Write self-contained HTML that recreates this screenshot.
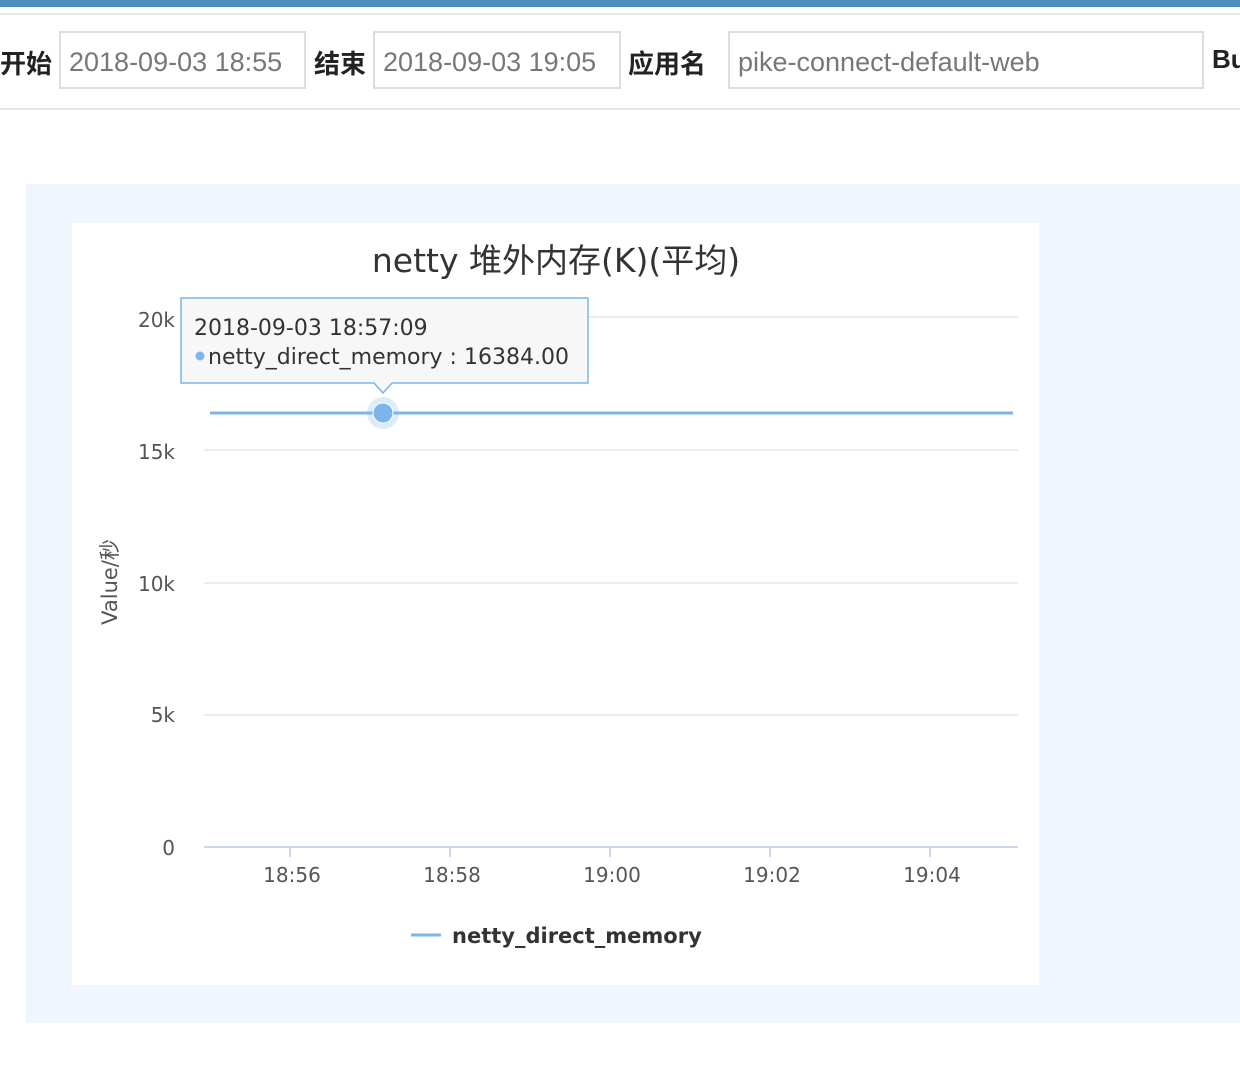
<!DOCTYPE html>
<html><head><meta charset="utf-8"><style>
body{margin:0;width:1240px;height:1067px;background:#fff;position:relative;overflow:hidden;font-family:"Liberation Sans","Noto Sans CJK SC",sans-serif;}
.abs{position:absolute}
.lbl{font-size:26px;color:#222;font-weight:bold;top:44px}
.inp{border:2px solid #ddd;height:58px;top:31px;font-size:27px;color:#777;line-height:58px;padding-left:8px;box-sizing:border-box;background:#fff}
</style></head><body>
<div class="abs" style="left:0;top:0;width:1240px;height:7px;background:#4d8dbb"></div>
<div class="abs" style="left:0;top:13px;width:1240px;height:2px;background:#e6e6e6"></div>
<div class="abs" style="left:0;top:108px;width:1240px;height:2px;background:#e6e6e6"></div>
<div class="abs lbl" style="left:0">开始</div>
<div class="abs inp" style="left:59px;width:247px">2018-09-03 18:55</div>
<div class="abs lbl" style="left:314px">结束</div>
<div class="abs inp" style="left:373px;width:248px">2018-09-03 19:05</div>
<div class="abs lbl" style="left:628px">应用名</div>
<div class="abs inp" style="left:728px;width:476px">pike-connect-default-web</div>
<div class="abs lbl" style="left:1212px">Bu</div>
<div class="abs" style="left:26px;top:184px;width:1214px;height:839px;background:#eff6fe"></div>
<div class="abs" style="left:72px;top:223px;width:967px;height:762px;background:#fff"></div>
<svg class="abs" style="left:0;top:0" width="1240" height="1067" font-family="DejaVu Sans, Noto Sans CJK SC, sans-serif">
<text x="556" y="272" text-anchor="middle" font-size="33" fill="#333">netty 堆外内存(K)(平均)</text>
<g stroke="#e6e6e6" stroke-width="1.5">
<line x1="204" y1="317" x2="1018" y2="317"/><line x1="204" y1="450" x2="1018" y2="450"/>
<line x1="204" y1="583" x2="1018" y2="583"/><line x1="204" y1="715" x2="1018" y2="715"/>
</g>
<line x1="204" y1="847" x2="1018" y2="847" stroke="#ccd6eb" stroke-width="2"/>
<g stroke="#ccd6eb" stroke-width="2"><line x1="290" y1="847" x2="290" y2="857"/><line x1="450" y1="847" x2="450" y2="857"/><line x1="610" y1="847" x2="610" y2="857"/><line x1="770" y1="847" x2="770" y2="857"/><line x1="930" y1="847" x2="930" y2="857"/></g>
<g font-size="20" fill="#555" text-anchor="end"><text x="175" y="327">20k</text><text x="175" y="459">15k</text><text x="175" y="591">10k</text><text x="175" y="722">5k</text><text x="175" y="855">0</text></g>
<g font-size="20" fill="#555" text-anchor="middle"><text x="292" y="882">18:56</text><text x="452" y="882">18:58</text><text x="612" y="882">19:00</text><text x="772" y="882">19:02</text><text x="932" y="882">19:04</text></g>
<text transform="translate(117,582) rotate(-90)" text-anchor="middle" font-size="21" fill="#555">Value/秒</text>
<line x1="210" y1="413" x2="1013" y2="413" stroke="#7cb5ec" stroke-width="3"/>
<circle cx="383" cy="413" r="16" fill="#7cb5ec" opacity="0.25"/>
<circle cx="383" cy="413" r="10" fill="#7cb5ec" stroke="#fff" stroke-width="1"/>
<path d="M181 298 H588 V383 H392 L383 393 L374 383 H181 Z" fill="#f7f7f7" fill-opacity="0.95" stroke="#7cb5ec" stroke-width="1.5"/>
<text x="194" y="335" font-size="22" fill="#333">2018-09-03 18:57:09</text>
<circle cx="200" cy="356" r="4.5" fill="#7cb5ec"/>
<text x="208" y="364" font-size="22" fill="#333">netty_direct_memory : 16384.00</text>
<line x1="411" y1="935" x2="441" y2="935" stroke="#7cb5ec" stroke-width="3"/>
<text x="452" y="943" font-size="21" font-weight="bold" fill="#333">netty_direct_memory</text>
</svg>
</body></html>
